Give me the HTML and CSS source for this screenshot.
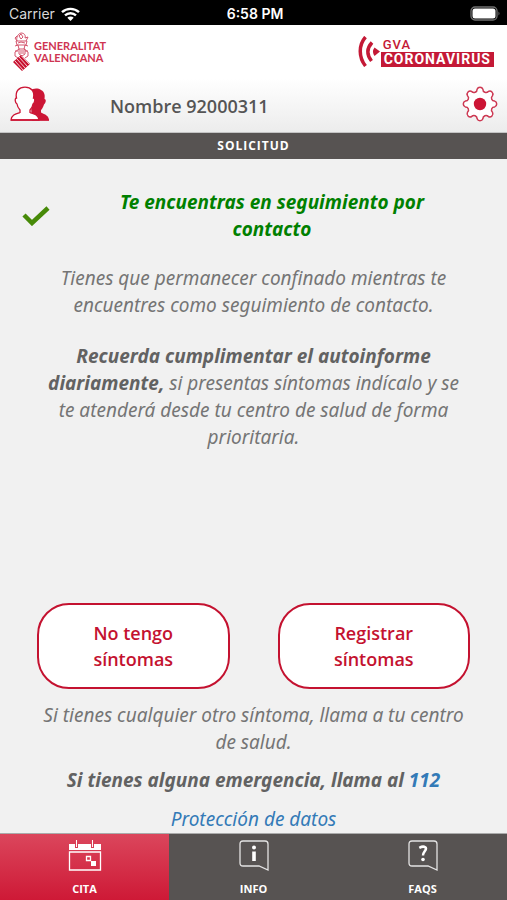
FILE: index.html
```html
<!DOCTYPE html>
<html lang="es">
<head>
<meta charset="utf-8">
<meta name="viewport" content="width=device-width, initial-scale=1">
<title>GVA Coronavirus</title>
<link rel="stylesheet" href="styles.css">
</head>
<body>
<div class="status">
  <div class="carrier"><span>Carrier</span>
    <svg width="19" height="14" viewBox="0 0 19 14" aria-hidden="true"><g fill="none" stroke="#fff" stroke-width="2.4"><path d="M1 5.200a12.400 12.400 0 0 1 17 0"/><path d="M4 8.400a8 8 0 0 1 11 0"/></g><path d="M9.500 14 6.300 10.700a4.600 4.600 0 0 1 6.400 0z" fill="#fff"/></svg>
  </div>
  <time class="clock">6:58 PM</time>
  <svg class="battery" width="31" height="15" viewBox="0 0 31 15" aria-hidden="true"><rect x="1" y="1" width="26" height="13" rx="4" fill="none" stroke="#707070" stroke-width="1.300"/><rect x="2.500" y="2.500" width="23" height="10" rx="2.500" fill="#fff"/><path d="M28.500 5.500q2 2 0 4z" fill="#707070"/></svg>
</div>
<header class="header">
  <div class="brands">
    <div class="brand">
      <svg width="17" height="40" viewBox="0 0 17 40" aria-hidden="true">
        <g fill="none" stroke="#d4566e" stroke-width="1"><path d="M4 9c-1-4 1-7 4-8 3 0 5 2 4 5l3-1-2 4M4 4l-2 2 2 3M6 4l2-2 2 3-2 2zM3 9h11l-1 4H4zM5 11l3-1 4 1M2 14l3-1 1 4-4 3v4l3 2M15 14l-3-1-1 4 4 3v4l-3 2M6 17h6v5l-3 2-3-2zM8 18v4M10 18v4M2 19h3M12 19h3"/></g>
        <path d="M8 23 17 32 9 39 0 30z" fill="#c8102e"/><path d="m6 25 8.500 9.500M4 27l8.500 9.500M2 29l8.500 9.500M8.500 24l8 8.500" stroke="#fff" stroke-width="0.800"/>
      </svg>
      <div class="brand-name">GENERALITAT<br>VALENCIANA</div>
    </div>
    <div class="app-brand">
      <svg width="23" height="31" viewBox="0 0 23 31" aria-hidden="true"><g fill="none" stroke="#c41936" stroke-width="3.500"><path d="M7.500 1C.5 9 .5 21 7.500 30"/><path d="M14 6.500c-5.500 6-5.500 12-.5 18.500"/></g><path d="M16.500 11.500 22 15.500l-5.500 4.500q-3-4.500 0-8.500z" fill="#c41936"/></svg>
      <div class="app-name"><span class="app-top">GVA</span><span class="app-box">CORONAVIRUS</span></div>
    </div>
  </div>
  <div class="user">
    <svg width="40" height="36" viewBox="0 0 40 36" aria-hidden="true"><path d="M20 5c3-3 8-3 11-1 4 2 4 6 3.500 9 2 0 1.500 4-.5 5.500-1 3-2 4.500-3 5.500v2.500c4 2 8 3 8 8H22z" fill="#cc1535"/><path d="M6.500 12C5 5 9 1.200 15 1.200S25 5 23.500 12c2 0 1.500 5-.5 6-.5 3-2 5-3 6v2.500c5 1.500 8.500 2.500 9 7.500H1c.5-5 4-6 9-7.500V24c-1.500-1.500-2.500-3-3-6-2-1-2.500-6-.5-6z" fill="#fff" stroke="#cc1535" stroke-width="1.300"/><path d="M1 34h38" stroke="#cc1535" stroke-width="1.300"/></svg>
    <span class="user-name">Nombre 92000311</span>
    <button class="settings" type="button" aria-label="Ajustes">
      <svg width="36" height="36" viewBox="0 0 36 36" aria-hidden="true"><path d="M32.700 20.900A3.100 3.100 0 0 0 30.500 26.300A3.100 3.100 0 0 1 26.300 30.500A3.100 3.100 0 0 0 20.900 32.700A3.100 3.100 0 0 1 15.100 32.700A3.100 3.100 0 0 0 9.700 30.500A3.100 3.100 0 0 1 5.500 26.300A3.100 3.100 0 0 0 3.300 20.900A3.100 3.100 0 0 1 3.300 15.100A3.100 3.100 0 0 0 5.500 9.700A3.100 3.100 0 0 1 9.700 5.500A3.100 3.100 0 0 0 15.100 3.300A3.100 3.100 0 0 1 20.900 3.300A3.100 3.100 0 0 0 26.300 5.500A3.100 3.100 0 0 1 30.500 9.700A3.100 3.100 0 0 0 32.700 15.100A3.100 3.100 0 0 1 32.700 20.900z" fill="#fff" stroke="#cd3852" stroke-width="1.500"/><circle cx="18" cy="18" r="6.200" fill="#cc1535"/></svg>
    </button>
  </div>
</header>
<h1 class="title">SOLICITUD</h1>
<main class="content">
  <div class="notice">
    <svg width="28" height="20" viewBox="0 0 28 20" aria-hidden="true"><path d="m2 9 8 8L26 2" fill="none" stroke="#478a08" stroke-width="4.500"/></svg>
    <h2>Te encuentras en seguimiento por contacto</h2>
  </div>
  <p class="confined">Tienes que permanecer confinado mientras te encuentres como seguimiento de contacto.</p>
  <p class="reminder"><strong>Recuerda cumplimentar el autoinforme diariamente,</strong> si presentas síntomas indícalo y se te atenderá desde tu centro de salud de forma prioritaria.</p>
  <div class="actions">
    <button type="button">No tengo<br>síntomas</button>
    <button type="button">Registrar<br>síntomas</button>
  </div>
  <p class="other">Si tienes cualquier otro síntoma, llama a tu centro de salud.</p>
  <p class="emergency"><strong>Si tienes alguna emergencia, llama al <a href="tel:112">112</a></strong></p>
  <p class="privacy"><a href="#datos">Protección de datos</a></p>
</main>
<nav class="tabs">
  <a class="tab active" href="#cita" aria-current="page">
    <svg width="34" height="32" viewBox="0 0 34 32" aria-hidden="true"><path d="M1 4h6v4h3V4h13v4h3V4h7v6H1zM8 0h1v7H8zM24 0h1v7h-1z" fill="#fff"/><path d="M1.500 12h31v18h-31z" fill="none" stroke="#fff" stroke-width="1.300"/><path d="M18.500 16.500h4v4h-4z" fill="none" stroke="#fff" stroke-width="1.300"/><path d="M23 21h5v5h-5z" fill="#fff"/></svg>
    <span>CITA</span>
  </a>
  <a class="tab" href="#info">
    <svg width="34" height="32" viewBox="0 0 34 32" aria-hidden="true"><path d="M6 1h22q3 0 3 3v26l-9-4H6q-3 0-3-3V4q0-3 3-3z" fill="none" stroke="#e4e3e3" stroke-width="1.300"/><circle cx="17" cy="7.500" r="2" fill="#fff"/><path d="M15.200 11.500h3.600V21h-3.600z" fill="#fff"/></svg>
    <span>INFO</span>
  </a>
  <a class="tab" href="#faqs">
    <svg width="34" height="32" viewBox="0 0 34 32" aria-hidden="true"><path d="M6 1h22q3 0 3 3v26l-9-4H6q-3 0-3-3V4q0-3 3-3z" fill="none" stroke="#e4e3e3" stroke-width="1.300"/><path d="M13.300 7.800q3.700-2 6-.6c2.800 2.300-2.500 4.300-2.300 8.300" fill="none" stroke="#fff" stroke-width="2.500"/><circle cx="17" cy="19.500" r="1.800" fill="#fff"/></svg>
    <span>FAQS</span>
  </a>
</nav>
</body>
</html>
```

FILE: styles.css
```css
* { box-sizing: border-box; }

body {
  margin: 0;
  min-height: 100vh;
  display: flex;
  flex-direction: column;
  background: #f1f1f1;
  color: #757575;
  font-family: "Open Sans", sans-serif;
}

h1, h2, p { margin: 0; }
svg { display: block; flex: none; }
button { font: inherit; cursor: pointer; }
a { color: #337ab7; text-decoration: none; }

.status {
  display: grid;
  grid-template-columns: 1fr auto 1fr;
  align-items: center;
  height: 25px;
  padding: 2px 6px 0 9px;
  background: #000;
  color: #fff;
  font: 14px/20px Inter, sans-serif;
}
.carrier { display: flex; align-items: center; gap: 6px; color: #d8d8d8; }
.clock { font-weight: 600; }
.battery { justify-self: end; }

.header {
  height: 108px;
  background: linear-gradient(#fff 50%, #ececec);
  border-bottom: 1px solid #c4c4c4;
}
.brands {
  display: flex;
  justify-content: space-between;
  align-items: flex-start;
  padding: 7px 13px 0;
  height: 55px;
}
.brand { display: flex; gap: 4px; }
.brand-name {
  padding-top: 8px;
  color: #cf3552;
  font: 700 11px/12px Lato, sans-serif;
}
.app-brand { display: flex; padding-top: 4px; }
.app-name { display: flex; flex-direction: column; color: #c41936; font-family: Roboto, sans-serif; }
.app-top { padding: 2px 0 0 2px; font-size: 13px; line-height: 14px; letter-spacing: 1px; font-weight: 500; }
.app-box {
  padding: 0 3px;
  background: #c41936;
  color: #fff;
  font-size: 14px;
  line-height: 15px;
  font-weight: 700;
  letter-spacing: 1px;
}
.user { display: flex; align-items: center; padding: 0 9px 0 10px; height: 48px; }
.user-name { flex: 1; margin-left: 60px; padding-top: 4px; color: #555; font-size: 18px; line-height: 24px; font-weight: 600; }
.settings { padding: 0; border: 0; background: none; }

.title {
  background: #575352;
  color: #fff;
  font-size: 12px;
  line-height: 26px;
  font-weight: 700;
  letter-spacing: 1px;
  text-align: center;
}

.content {
  flex: 1;
  display: flex;
  flex-direction: column;
  padding: 30px 37px 0;
  font-family: "Noto Sans", sans-serif;
  font-size: 19px;
  line-height: 27px;
  font-style: italic;
  text-align: center;
}
.notice { display: flex; align-items: center; margin: 0 0 22px -15px; }
.notice h2 { flex: 1; padding: 0 0 0 46px; margin-right: 22px; color: green; font-size: inherit; font-weight: 700; }
.reminder { margin-top: 24px; padding: 0 4px; }
strong { color: #626262; font-weight: 700; }

.actions {
  display: grid;
  grid-template-columns: 1fr 1fr;
  gap: 48px;
  margin-top: auto;
}
.actions button {
  padding: 15px 8px;
  border: 2px solid #c41230;
  border-radius: 32px;
  background: #fff;
  color: #c41230;
  font-family: "Open Sans", sans-serif;
  font-size: 18px;
  line-height: 26px;
  font-style: normal;
  font-weight: 600;
}
.other { margin-top: 13px; }
.emergency { margin-top: 11px; }
.privacy { margin-top: 12px; }

.tabs {
  display: grid;
  grid-template-columns: repeat(3, 1fr);
  background: #575352;
  border-top: 1px solid #aaa;
}
.tab {
  display: flex;
  flex-direction: column;
  align-items: center;
  gap: 9px;
  padding: 6px 0 3px;
  color: #fff;
  font-size: 11px;
  line-height: 16px;
  font-weight: 700;
}
.tab.active { background: linear-gradient(#db465c, #ce1936); }
```
